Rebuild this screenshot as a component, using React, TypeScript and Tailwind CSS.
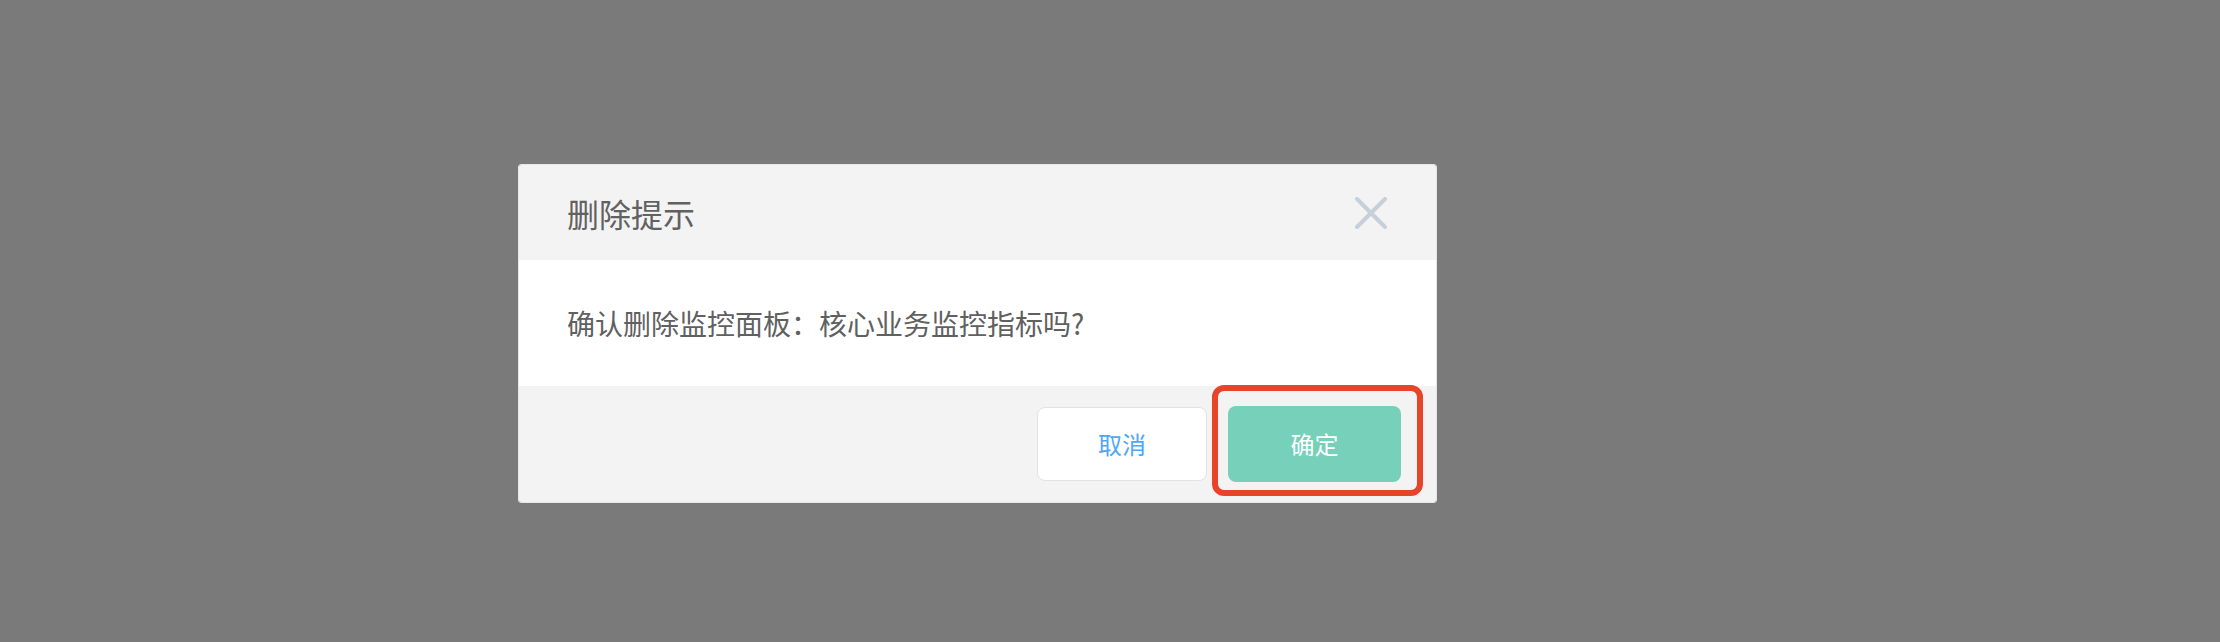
import React from 'react'

function CloseIcon() {
    return (
        <svg width="32" height="32" viewBox="0 0 32 32" fill="none">
            <path d="M2 2 L30 30 M30 2 L2 30" stroke="#c6cfda" strokeWidth="4" strokeLinecap="round" />
        </svg>
    )
}

export default function App() {
    return (
        <div
            className="w-full h-[642px] bg-[#7a7a7a] pl-[518px] pt-[164px]"
            style={{ fontFamily: '"Noto Sans CJK SC", "Noto Sans", sans-serif' }}
        >
            {/* Dialog */}
            <div className="w-[919px] rounded-[3px] border border-[#e6e6e6] overflow-hidden">

                {/* Header */}
                <div className="h-[95px] bg-[#f3f3f3] flex items-center justify-between pl-[48px] pr-[49px]">
                    <h2 className="text-[32px] text-[#616161] leading-none">删除提示</h2>
                    <button className="w-[32px] h-[32px] flex items-center justify-center">
                        <CloseIcon />
                    </button>
                </div>

                {/* Body */}
                <div className="h-[126px] bg-white flex items-center pl-[48px]">
                    <p className="text-[28px] text-[#606060] leading-none">确认删除监控面板：核心业务监控指标吗?</p>
                </div>

                {/* Footer */}
                <div className="h-[116px] bg-[#f3f3f3] flex items-center justify-end gap-[21px] pr-[35px]">
                    <button className="w-[170px] h-[74px] bg-white border border-[#e3e3e3] rounded-[8px] text-[24px] text-[#4fa7f5]">
                        取消
                    </button>
                    <div className="relative">
                        <button className="w-[173px] h-[76px] bg-[#77d0b9] rounded-[8px] text-[24px] text-white">
                            确定
                        </button>
                        {/* highlight annotation */}
                        <span className="absolute -left-[16px] -right-[22px] -top-[21px] -bottom-[14px] border-[6px] border-[#e8442a] rounded-[12px] pointer-events-none"></span>
                    </div>
                </div>
            </div>
        </div>
    )
}
